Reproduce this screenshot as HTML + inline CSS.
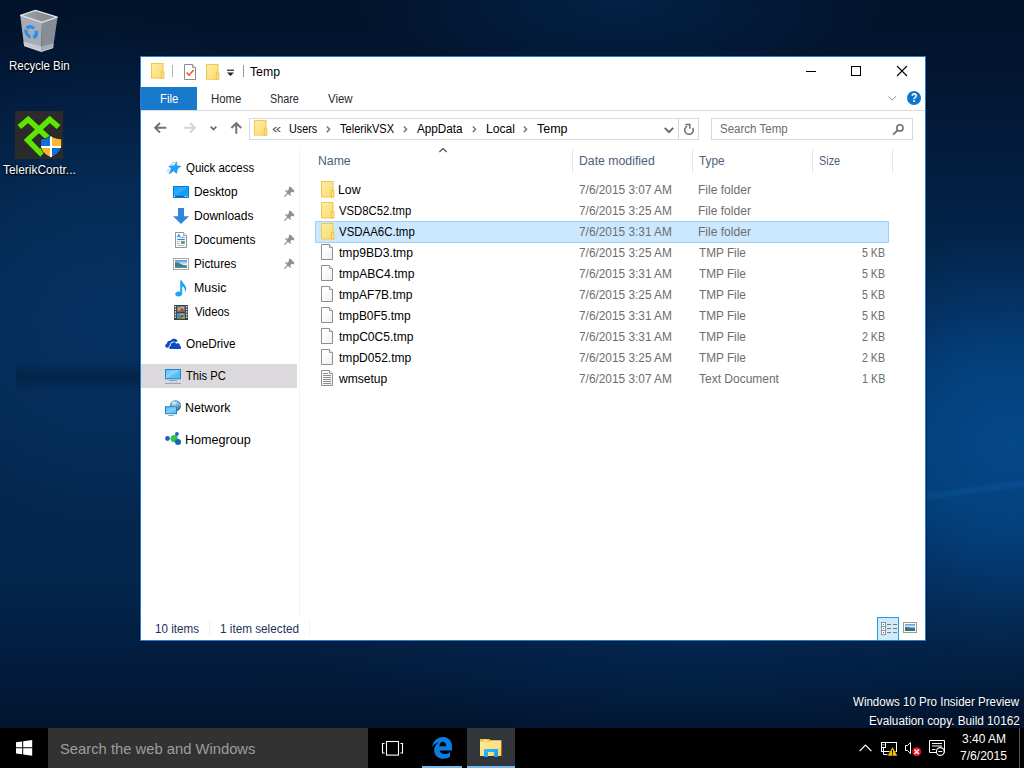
<!DOCTYPE html>
<html><head><meta charset="utf-8"><title>Temp</title>
<style>
html,body{margin:0;padding:0;}
body{width:1024px;height:768px;overflow:hidden;position:relative;background:#06244a;font-family:"Liberation Sans",sans-serif;}
.t{position:absolute;white-space:nowrap;line-height:20px;transform-origin:0 50%;font-family:"Liberation Sans",sans-serif;}
.a{position:absolute;}
svg{position:absolute;overflow:visible;}
</style></head><body>
<div class="a" id="bg" style="left:0;top:0;width:1024px;height:768px;background:
radial-gradient(ellipse 300px 262px at 1010px 445px, rgba(5,74,142,0.95) 0%, rgba(4,66,128,0.88) 35%, rgba(4,52,102,0.6) 62%, rgba(3,40,80,0.25) 82%, rgba(2,20,46,0) 100%),
radial-gradient(ellipse 330px 300px at 110px 320px, rgba(5,50,98,0.95) 0%, rgba(5,46,92,0.85) 40%, rgba(4,38,78,0.5) 70%, rgba(3,30,64,0) 100%),
radial-gradient(ellipse 260px 90px at 620px 0px, rgba(3,40,80,0.7), rgba(2,20,44,0) 100%),
radial-gradient(ellipse 380px 100px at 700px 640px, rgba(3,40,84,0.7), rgba(2,20,44,0) 100%),
linear-gradient(to bottom,#02132b 0px,#02152f 60px,#031e40 180px,#03264e 300px,#03264e 570px,#031e40 650px,#02152f 728px);"></div>
<div class="a" style="left:16px;top:362px;width:124px;height:30px;background:linear-gradient(to bottom,rgba(2,20,44,0),rgba(2,20,44,0.42) 50%,rgba(2,20,44,0));"></div>
<div class="a" style="left:926px;top:470px;width:98px;height:40px;background:linear-gradient(172deg,rgba(20,110,190,0) 40%,rgba(20,110,190,0.22) 50%,rgba(20,110,190,0) 60%);"></div>
<svg style="left:0;top:0" width="80" height="60" viewBox="0 0 80 60">
<defs><linearGradient id="rb1" x1="0" y1="0" x2="1" y2="0"><stop offset="0" stop-color="#a4a9b1"/><stop offset="0.5" stop-color="#8c9199"/><stop offset="1" stop-color="#838892"/></linearGradient></defs>
<path d="M20.2 15.4 L42 22.6 L41.3 51.6 L24.1 45.7 Z" fill="#a8adb5"/>
<path d="M42 22.6 L57.6 17.1 L53.1 47.7 L41.3 51.6 Z" fill="#878d96"/>
<path d="M23.5 41.4 L41.4 46.4 L41.3 51.6 L24.1 45.7 Z" fill="#c6c9d1"/>
<path d="M41.4 46.4 L53.6 43.6 L53.1 47.7 L41.3 51.6 Z" fill="#a9aeb7"/>
<path d="M20.6 15.4 L35.5 10.4 L57.2 17.1 L42 22.4 Z" fill="url(#rb1)" stroke="#e1e4e8" stroke-width="1.25" stroke-linejoin="round"/>
<path d="M24.1 45.7 L41.3 51.6 L53.1 47.7" fill="none" stroke="#d6d9de" stroke-width="0.8" stroke-linejoin="round"/>
<g transform="matrix(1 0.22 0 1 0 -7)">
<circle cx="31.2" cy="32.2" r="5.2" fill="none" stroke="#2390f0" stroke-width="3.3" stroke-dasharray="8.4 2.5" transform="rotate(-150 31.2 32.2)"/>
</g>
</svg>
<span class="t" style="left:9.10px;top:56.00px;font-size:12px;color:#fff;transform:scaleX(0.9564);line-height:20px;text-shadow:0 1px 2px #000,0 0 2px #000;">Recycle Bin</span>
<svg style="left:0;top:100px" width="80" height="70" viewBox="0 100 80 70">
<rect x="15" y="111" width="48" height="48" fill="#2b2b2b"/>
<g fill="none" stroke="#5ce600" stroke-width="5.4" stroke-linejoin="miter">
<path d="M19.3 127 L28.2 119.4 L49.5 139.2"/>
<path d="M58.6 127 L49.7 119.4 L27.6 140 L40.2 152.8 L50 142"/>
</g>
<defs><clipPath id="sh"><path d="M41 139.3 C45 139 48.5 138 51 136.2 C53.5 138 57 139 61.2 139.3 L61.2 146 C60.5 151 56.5 155 51 157.2 C45.5 155 41.6 151 41 146 Z"/></clipPath></defs>
<path d="M41 139.3 C45 139 48.5 138 51 136.2 C53.5 138 57 139 61.2 139.3 L61.2 146 C60.5 151 56.5 155 51 157.2 C45.5 155 41.6 151 41 146 Z" fill="none" stroke="#1d1d1d" stroke-width="1.2"/>
<g clip-path="url(#sh)">
<rect x="40" y="135" width="11" height="12" fill="#0f6fd6"/><rect x="51" y="135" width="11" height="12" fill="#fdb72f"/>
<rect x="40" y="147" width="11" height="11" fill="#fdb72f"/><rect x="51" y="147" width="11" height="11" fill="#0f6fd6"/>
<rect x="50" y="135" width="2" height="23" fill="#fff"/><rect x="40" y="146" width="22" height="2" fill="#fff"/>
</g>
</svg>
<span class="t" style="left:2.75px;top:160.00px;font-size:12px;color:#fff;transform:scaleX(0.9917);line-height:20px;text-shadow:0 1px 2px #000,0 0 2px #000;">TelerikContr...</span>
<span class="t" style="left:852.50px;top:692.00px;font-size:12px;color:#fff;transform:scaleX(0.9617);line-height:20px;text-shadow:0 1px 1px rgba(0,0,0,.6);">Windows 10 Pro Insider Preview</span>
<span class="t" style="left:868.58px;top:711.00px;font-size:12px;color:#fff;transform:scaleX(0.9798);line-height:20px;text-shadow:0 1px 1px rgba(0,0,0,.6);">Evaluation copy. Build 10162</span>
<div class="a" style="left:139px;top:55px;width:788px;height:587px;background:rgba(0,5,20,0.35);"></div>
<div class="a" id="win" style="left:140px;top:56px;width:784px;height:583px;border:1px solid #1883d7;background:#fff;"></div>
<svg style="left:151px;top:63px" width="14" height="16.0727" viewBox="0 0 14 17" preserveAspectRatio="none">
<defs><linearGradient id="fg1" x1="0" y1="0" x2="1" y2="1"><stop offset="0" stop-color="#ffeea4"/><stop offset="1" stop-color="#fbd971"/></linearGradient></defs>
<rect x="0.5" y="0.5" width="11.5" height="15.5" fill="url(#fg1)" stroke="#eec84e"/>
<rect x="10.3" y="9.5" width="2.6" height="6.5" fill="#ffe48a" stroke="#eabf3f" stroke-width="0.9"/>
</svg>
<div class="a" style="left:172px;top:65px;width:1px;height:12px;background:#b4b4b4;"></div>
<svg style="left:184px;top:64px" width="13" height="16" viewBox="0 0 13 16">
<path d="M0.5 0.5 L8.5 0.5 L11.5 3.5 L11.5 15.5 L0.5 15.5 Z" fill="#fff" stroke="#8c8c8c"/>
<path d="M8.5 0.5 L8.5 3.5 L11.5 3.5" fill="#ececec" stroke="#8c8c8c" stroke-width="0.9"/>
<path d="M2.6 8.6 L5 11.2 L9.6 6" fill="none" stroke="#f0541e" stroke-width="1.5"/>
</svg>
<svg style="left:206px;top:64px" width="14" height="16.2788" viewBox="0 0 14 17" preserveAspectRatio="none">
<defs><linearGradient id="fg2" x1="0" y1="0" x2="1" y2="1"><stop offset="0" stop-color="#ffeea4"/><stop offset="1" stop-color="#fbd971"/></linearGradient></defs>
<rect x="0.5" y="0.5" width="11.5" height="15.5" fill="url(#fg2)" stroke="#eec84e"/>
<rect x="10.3" y="9.5" width="2.6" height="6.5" fill="#ffe48a" stroke="#eabf3f" stroke-width="0.9"/>
</svg>
<svg style="left:227px;top:69px" width="8" height="8" viewBox="0 0 8 8"><rect x="0" y="0.6" width="7" height="1.2" fill="#222"/><path d="M0 3.5 L7 3.5 L3.5 7 Z" fill="#222"/></svg>
<div class="a" style="left:243px;top:65px;width:1px;height:12px;background:#9a9a9a;"></div>
<span class="t" style="left:250.24px;top:62.00px;font-size:12px;color:#000;transform:scaleX(1.0201);line-height:20px;">Temp</span>
<div class="a" style="left:806px;top:71px;width:10px;height:1px;background:#000;"></div>
<div class="a" style="left:851px;top:66px;width:8px;height:8px;border:1px solid #000;"></div>
<svg style="left:897px;top:66px" width="10" height="10" viewBox="0 0 10 10"><path d="M0 0 L10 10 M10 0 L0 10" stroke="#000" stroke-width="1.1" fill="none"/></svg>
<div class="a" style="left:141px;top:87px;width:56px;height:23px;background:#1979ca;"></div>
<span class="t" style="left:159.71px;top:89.00px;font-size:12px;color:#fff;transform:scaleX(0.9477);line-height:20px;">File</span>
<span class="t" style="left:210.71px;top:89.00px;font-size:12px;color:#2b2b2b;transform:scaleX(0.9489);line-height:20px;">Home</span>
<span class="t" style="left:270.15px;top:89.00px;font-size:12px;color:#2b2b2b;transform:scaleX(0.9014);line-height:20px;">Share</span>
<span class="t" style="left:328.00px;top:89.00px;font-size:12px;color:#2b2b2b;transform:scaleX(0.9507);line-height:20px;">View</span>
<div class="a" style="left:141px;top:110px;width:784px;height:1px;background:#dadbdc;"></div>
<svg style="left:888px;top:96px" width="9" height="5" viewBox="0 0 9 5"><path d="M0.4 0.4 L4.2 4 L8 0.4" stroke="#8c8c8c" stroke-width="1" fill="none"/></svg>
<div class="a" style="left:907px;top:91px;width:14px;height:14px;border-radius:7px;background:#0f74d0;"></div>
<span class="t" style="left:910.87px;top:88.00px;font-size:12px;color:#fff;font-weight:bold;transform:scaleX(0.8566);line-height:20px;">?</span>
<svg style="left:154px;top:122px" width="13" height="12" viewBox="0 0 13 12"><path d="M12.2 5.8 L1.6 5.8 M6 1 L1.2 5.8 L6 10.6" stroke="#727272" stroke-width="2" fill="none"/></svg>
<svg style="left:182.8px;top:122px" width="13" height="12" viewBox="0 0 13 12"><path d="M0.8 5.8 L11.4 5.8 M7 1 L11.8 5.8 L7 10.6" stroke="#d4d4d4" stroke-width="2" fill="none"/></svg>
<svg style="left:210px;top:126px" width="7" height="5" viewBox="0 0 7 5"><path d="M0.7 0.7 L3.5 3.5 L6.3 0.7" stroke="#6a6a6a" stroke-width="1.7" fill="none"/></svg>
<svg style="left:230px;top:122px" width="13" height="12" viewBox="0 0 13 12"><path d="M6.3 11.8 L6.3 1.4 M1.4 6 L6.3 1.1 L11.2 6" stroke="#727272" stroke-width="2" fill="none"/></svg>
<div class="a" style="left:249px;top:118px;width:448px;height:20px;border:1px solid #d9d9d9;background:#fff;"></div>
<svg style="left:254px;top:120px" width="14" height="16.0727" viewBox="0 0 14 17" preserveAspectRatio="none">
<defs><linearGradient id="fg3" x1="0" y1="0" x2="1" y2="1"><stop offset="0" stop-color="#ffeea4"/><stop offset="1" stop-color="#fbd971"/></linearGradient></defs>
<rect x="0.5" y="0.5" width="11.5" height="15.5" fill="url(#fg3)" stroke="#eec84e"/>
<rect x="10.3" y="9.5" width="2.6" height="6.5" fill="#ffe48a" stroke="#eabf3f" stroke-width="0.9"/>
</svg>
<span class="t" style="left:272.39px;top:119.00px;font-size:12px;color:#555;transform:scaleX(1.3913);line-height:20px;">«</span>
<span class="t" style="left:289.21px;top:119.00px;font-size:12px;color:#000;transform:scaleX(0.8981);line-height:20px;">Users</span>
<svg style="left:326.3px;top:126px" width="5" height="7" viewBox="0 0 5 7"><path d="M0.8 0.5 L3.6 3.3 L0.8 6.1" stroke="#777" stroke-width="1.5" fill="none"/></svg>
<span class="t" style="left:340.17px;top:119.00px;font-size:12px;color:#000;transform:scaleX(0.9212);line-height:20px;">TelerikVSX</span>
<svg style="left:402.7px;top:126px" width="5" height="7" viewBox="0 0 5 7"><path d="M0.8 0.5 L3.6 3.3 L0.8 6.1" stroke="#777" stroke-width="1.5" fill="none"/></svg>
<span class="t" style="left:417.20px;top:119.00px;font-size:12px;color:#000;transform:scaleX(0.9767);line-height:20px;">AppData</span>
<svg style="left:472px;top:126px" width="5" height="7" viewBox="0 0 5 7"><path d="M0.8 0.5 L3.6 3.3 L0.8 6.1" stroke="#777" stroke-width="1.5" fill="none"/></svg>
<span class="t" style="left:485.65px;top:119.00px;font-size:12px;color:#000;transform:scaleX(1.0097);line-height:20px;">Local</span>
<svg style="left:522.8px;top:126px" width="5" height="7" viewBox="0 0 5 7"><path d="M0.8 0.5 L3.6 3.3 L0.8 6.1" stroke="#777" stroke-width="1.5" fill="none"/></svg>
<span class="t" style="left:536.74px;top:119.00px;font-size:12px;color:#000;transform:scaleX(1.0410);line-height:20px;">Temp</span>
<svg style="left:664px;top:127px" width="10" height="7" viewBox="0 0 10 7"><path d="M0.8 0.9 L5 5.1 L9.2 0.9" stroke="#666" stroke-width="1.9" fill="none"/></svg>
<div class="a" style="left:678px;top:119px;width:1px;height:20px;background:#d9d9d9;"></div>
<svg style="left:683px;top:123px" width="12" height="12" viewBox="0 0 12 12"><path d="M9.7 4.85 A4.3 4.3 0 1 1 4.2 3.1" stroke="#6e6e6e" stroke-width="1.5" fill="none"/><path d="M2.4 1.5 L6.8 1.5 L6.8 5.8" stroke="#6e6e6e" stroke-width="1.5" fill="none"/></svg>
<div class="a" style="left:711px;top:118px;width:200px;height:20px;border:1px solid #d9d9d9;background:#fff;"></div>
<span class="t" style="left:720.32px;top:119.00px;font-size:12px;color:#6d6d6d;transform:scaleX(0.9597);line-height:20px;">Search Temp</span>
<svg style="left:892px;top:123px" width="13" height="13" viewBox="0 0 13 13"><circle cx="7.9" cy="4.9" r="3.1" stroke="#707070" stroke-width="1.6" fill="none"/><path d="M5.5 7.3 L1.1 11.6" stroke="#707070" stroke-width="1.8"/></svg>
<span class="t" style="left:154.95px;top:619.00px;font-size:12px;color:#23305a;transform:scaleX(0.9700);line-height:20px;">10 items</span>
<span class="t" style="left:219.94px;top:619.00px;font-size:12px;color:#23305a;transform:scaleX(0.9782);line-height:20px;">1 item selected</span>
<div class="a" style="left:209px;top:621px;width:1px;height:14px;background:#f1f1f1;"></div>
<div class="a" style="left:309px;top:621px;width:1px;height:14px;background:#f1f1f1;"></div>
<div class="a" style="left:299px;top:146px;width:1px;height:471px;background:#f4f4f4;"></div>
<div class="a" style="left:141px;top:364px;width:156px;height:24px;background:#dbd9dc;"></div>
<svg style="left:162px;top:156px" width="32" height="24" viewBox="0 0 32 24">
<path d="M14.6 5.8 L14.9 9.9 L19.1 10.1 L15.6 12.7 L14.6 17.4 L11.6 14.9 L7.1 17.9 L9.1 12.6 L6.8 10.1 L12.2 9.7 Z" fill="#22a2f5" stroke="#1b8fe4" stroke-width="0.5" stroke-linejoin="round"/>
<path d="M9.7 6.5 L13.2 6.5 M8.4 8.5 L11.4 8.5 M5.3 13.5 L7.8 13.5 M4.4 15.6 L6.9 15.6" stroke="#7cc6f8" stroke-width="0.8"/>
</svg>
<span class="t" style="left:185.76px;top:158.00px;font-size:12px;color:#000;transform:scaleX(0.9555);line-height:20px;">Quick access</span>
<svg style="left:173px;top:186px" width="16" height="12" viewBox="0 0 16 12">
<defs><linearGradient id="dk" x1="0" y1="0" x2="1" y2="1"><stop offset="0" stop-color="#1a9ff8"/><stop offset="0.45" stop-color="#2eacfd"/><stop offset="0.55" stop-color="#129cf8"/><stop offset="1" stop-color="#1ea4fb"/></linearGradient></defs>
<rect x="0.5" y="0.5" width="15" height="11" fill="url(#dk)" stroke="#0b7ccd"/>
<rect x="1" y="9.8" width="14" height="1.7" fill="#0b7ccd"/>
<rect x="2" y="10" width="9" height="0.9" fill="#0a5fa8"/>
<rect x="1" y="9.9" width="1" height="1.1" fill="#fff"/><rect x="11.8" y="9.9" width="1" height="1.1" fill="#fff"/><rect x="13.8" y="9.9" width="1" height="1.1" fill="#fff"/>
</svg>
<span class="t" style="left:193.67px;top:182.00px;font-size:12px;color:#000;transform:scaleX(0.9900);line-height:20px;">Desktop</span>
<svg style="left:173px;top:208px" width="16" height="16" viewBox="0 0 16 16">
<path d="M5 0 L11 0 L11 8.2 L16 8.2 L8 16 L0 8.2 L5 8.2 Z" fill="#2e86de"/>
</svg>
<span class="t" style="left:193.66px;top:206.00px;font-size:12px;color:#000;transform:scaleX(1.0024);line-height:20px;">Downloads</span>
<svg style="left:175px;top:232px" width="13" height="16" viewBox="0 0 13 16">
<path d="M0.5 0.5 L8.5 0.5 L11.5 3.5 L11.5 15.5 L0.5 15.5 Z" fill="#fff" stroke="#949494"/>
<path d="M8.5 0.5 L8.5 3.5 L11.5 3.5" fill="#efefef" stroke="#949494" stroke-width="0.8"/>
<path d="M2.3 5.6 L3.9 2.2 L5.4 5.6 M2.9 4.5 L4.9 4.5" stroke="#2f86de" stroke-width="0.9" fill="none"/>
<path d="M6.2 5.2 L9.8 5.2" stroke="#3f93e4" stroke-width="0.9"/>
<path d="M2.2 7.4 L9.8 7.4" stroke="#1f7fdc" stroke-width="1.1"/>
<path d="M2.2 9.4 L4.8 9.4 M2.2 11.4 L4.8 11.4 M2.2 13.4 L9.8 13.4" stroke="#a8a8a8" stroke-width="0.9"/>
<rect x="6" y="8.8" width="3.8" height="1.4" fill="#5a9be8"/><rect x="6" y="10.2" width="3.8" height="1.6" fill="#4f8058"/>
</svg>
<span class="t" style="left:193.65px;top:230.00px;font-size:12px;color:#000;transform:scaleX(1.0139);line-height:20px;">Documents</span>
<svg style="left:173px;top:258px" width="16" height="12" viewBox="0 0 16 12">
<defs><linearGradient id="pc1" x1="0" y1="0" x2="0" y2="1"><stop offset="0" stop-color="#3f8df0"/><stop offset="0.3" stop-color="#9cc8f6"/><stop offset="0.55" stop-color="#e4f1fb"/><stop offset="0.75" stop-color="#7fa8c8"/><stop offset="1" stop-color="#3a74b8"/></linearGradient></defs>
<rect x="0.5" y="0.5" width="15" height="11" fill="#fff" stroke="#a6a6a6"/>
<rect x="2" y="2" width="12" height="8" fill="url(#pc1)"/>
<path d="M2 4.6 L4.5 4.2 L7 5.6 L10 7 L13.6 7.8 L14 8.6 L2 8.6 Z" fill="#3f7052" opacity="0.9"/>
</svg>
<span class="t" style="left:193.68px;top:254.00px;font-size:12px;color:#000;transform:scaleX(0.9795);line-height:20px;">Pictures</span>
<svg style="left:175px;top:279.5px" width="12" height="17" viewBox="0 0 12 17">
<path d="M5.2 0.4 L7 0.4 C7.6 3.4 10.8 4.6 11.2 8 C11.3 9.8 10.8 11 10 12 C10.4 9.2 9.2 7.2 7.2 6.4 L7.2 13.4 C7.2 15.2 5.4 16.4 3.4 16.4 C1.6 16.4 0.2 15.5 0.2 14.2 C0.2 12.6 1.9 11.4 3.8 11.4 C4.3 11.4 4.8 11.5 5.2 11.7 Z" fill="#1fa4f4"/>
</svg>
<span class="t" style="left:193.63px;top:278.00px;font-size:12px;color:#000;transform:scaleX(1.0312);line-height:20px;">Music</span>
<svg style="left:174px;top:305px" width="14" height="15" viewBox="0 0 14 15">
<rect x="0" y="0" width="14" height="15" fill="#404040"/>
<rect x="3" y="1" width="8" height="6" fill="#3f7ad8"/><rect x="3" y="8" width="8" height="6" fill="#4787e0"/>
<rect x="3.6" y="2.4" width="2.6" height="3.4" fill="#d9a23a"/><rect x="6.6" y="1.8" width="3.2" height="3.2" fill="#e8c84a"/><rect x="7.2" y="3.2" width="2" height="2.6" fill="#7a4a2a"/>
<rect x="3" y="5.8" width="8" height="1.2" fill="#c8483a"/>
<rect x="6.4" y="8.8" width="3" height="2.6" fill="#e0b040"/><rect x="6.8" y="10.2" width="2.2" height="2" fill="#6a4028"/>
<rect x="3" y="12.6" width="8" height="1.4" fill="#4f9a48"/><rect x="7.6" y="12.2" width="3.4" height="1" fill="#d8a838"/>
<g fill="#ececec"><rect x="0.7" y="1" width="1.4" height="1.4"/><rect x="0.7" y="3.6" width="1.4" height="1.4"/><rect x="0.7" y="6.2" width="1.4" height="1.4"/><rect x="0.7" y="8.8" width="1.4" height="1.4"/><rect x="0.7" y="11.4" width="1.4" height="1.4"/>
<rect x="11.9" y="1" width="1.4" height="1.4"/><rect x="11.9" y="3.6" width="1.4" height="1.4"/><rect x="11.9" y="6.2" width="1.4" height="1.4"/><rect x="11.9" y="8.8" width="1.4" height="1.4"/><rect x="11.9" y="11.4" width="1.4" height="1.4"/></g>
</svg>
<span class="t" style="left:194.60px;top:302.00px;font-size:12px;color:#000;transform:scaleX(0.9439);line-height:20px;">Videos</span>
<svg style="left:284px;top:187px" width="10" height="10" viewBox="0 0 10 10">
<path d="M0.4 9.6 L4 6" stroke="#87929a" stroke-width="1.2"/>
<path d="M4.3 5.7 L7.3 2.7" stroke="#87929a" stroke-width="4"/>
<path d="M5.9 0.9 L9.1 4.1" stroke="#87929a" stroke-width="2.4" stroke-linecap="round"/>
<path d="M2 3.8 L6.2 8" stroke="#87929a" stroke-width="1.5" stroke-linecap="round"/>
</svg>
<svg style="left:284px;top:211px" width="10" height="10" viewBox="0 0 10 10">
<path d="M0.4 9.6 L4 6" stroke="#87929a" stroke-width="1.2"/>
<path d="M4.3 5.7 L7.3 2.7" stroke="#87929a" stroke-width="4"/>
<path d="M5.9 0.9 L9.1 4.1" stroke="#87929a" stroke-width="2.4" stroke-linecap="round"/>
<path d="M2 3.8 L6.2 8" stroke="#87929a" stroke-width="1.5" stroke-linecap="round"/>
</svg>
<svg style="left:284px;top:235px" width="10" height="10" viewBox="0 0 10 10">
<path d="M0.4 9.6 L4 6" stroke="#87929a" stroke-width="1.2"/>
<path d="M4.3 5.7 L7.3 2.7" stroke="#87929a" stroke-width="4"/>
<path d="M5.9 0.9 L9.1 4.1" stroke="#87929a" stroke-width="2.4" stroke-linecap="round"/>
<path d="M2 3.8 L6.2 8" stroke="#87929a" stroke-width="1.5" stroke-linecap="round"/>
</svg>
<svg style="left:284px;top:259px" width="10" height="10" viewBox="0 0 10 10">
<path d="M0.4 9.6 L4 6" stroke="#87929a" stroke-width="1.2"/>
<path d="M4.3 5.7 L7.3 2.7" stroke="#87929a" stroke-width="4"/>
<path d="M5.9 0.9 L9.1 4.1" stroke="#87929a" stroke-width="2.4" stroke-linecap="round"/>
<path d="M2 3.8 L6.2 8" stroke="#87929a" stroke-width="1.5" stroke-linecap="round"/>
</svg>
<svg style="left:160px;top:332px" width="32" height="24" viewBox="0 0 32 24">
<path d="M6.4 15.6 C4.8 14.8 4.8 12.2 7 11.4 C7 9.6 8.6 8.5 10.3 8.8 C11.2 7.3 12.8 6.7 14.4 6.7 C16.1 6.7 17.3 7.7 17.5 9.4 L16.4 9.8 L10 16 Z" fill="#0f4bc0"/>
<path d="M9.9 17 C9 16.6 8.9 14 10.8 13.5 C10.9 11.5 12.3 10.3 13.7 10.3 C14.8 10.3 15.7 10.8 16.3 11.7 C17 11.2 18 11.2 18.7 11.6 C19.6 12.2 20 13.1 20 14 C20.8 14.3 21.1 15 21.1 15.7 C21.1 16.4 20.8 17 20.3 17 Z" fill="#0f4bc0" stroke="#fff" stroke-width="1.7" paint-order="stroke"/>
<rect x="5" y="17.05" width="17" height="2" fill="#fff"/>
</svg>
<span class="t" style="left:185.85px;top:334.00px;font-size:12px;color:#000;transform:scaleX(0.9793);line-height:20px;">OneDrive</span>
<svg style="left:165px;top:369px" width="16" height="15" viewBox="0 0 16 15">
<defs><linearGradient id="tp" x1="0" y1="0" x2="1" y2="1"><stop offset="0" stop-color="#52bcf9"/><stop offset="0.45" stop-color="#8ad5fc"/><stop offset="0.55" stop-color="#5cc2fa"/><stop offset="1" stop-color="#4ab6f7"/></linearGradient></defs>
<rect x="0.5" y="0.5" width="15" height="9.3" fill="url(#tp)" stroke="#2d82c2" stroke-width="1"/>
<rect x="4" y="11" width="8" height="0.9" fill="#7d9db8"/>
<rect x="0" y="13.9" width="16" height="0.9" fill="#7d9db8"/>
</svg>
<span class="t" style="left:186.17px;top:366.00px;font-size:12px;color:#000;transform:scaleX(0.9333);line-height:20px;">This PC</span>
<svg style="left:165px;top:400px" width="16" height="16" viewBox="0 0 16 16">
<defs><radialGradient id="gl" cx="0.4" cy="0.3" r="0.75"><stop offset="0" stop-color="#d2ecf8"/><stop offset="0.5" stop-color="#5a9cc4"/><stop offset="1" stop-color="#2c6c98"/></radialGradient>
<linearGradient id="nm" x1="0" y1="0" x2="1" y2="1"><stop offset="0" stop-color="#52bcf9"/><stop offset="0.5" stop-color="#7fd0fb"/><stop offset="1" stop-color="#4ab6f7"/></linearGradient></defs>
<circle cx="10.4" cy="5.7" r="5.6" fill="url(#gl)"/>
<path d="M7 3.2 C8.5 2 10 3.6 11.8 2.2 M6 7 C8 5.6 9.4 8 12.6 6.2 M12.5 3.5 C13.4 4.5 14.5 4 15 5.5" stroke="#e4f5fc" stroke-width="1" fill="none" opacity="0.85"/>
<rect x="0.5" y="6.7" width="11" height="7" fill="url(#nm)" stroke="#2d82c2" stroke-width="1"/>
<rect x="3.2" y="15" width="5.6" height="0.9" fill="#7d9db8"/>
</svg>
<span class="t" style="left:185.43px;top:398.00px;font-size:12px;color:#000;transform:scaleX(1.0342);line-height:20px;">Network</span>
<svg style="left:165px;top:432px" width="16" height="13" viewBox="0 0 16 13">
<circle cx="2.5" cy="6.5" r="2.4" fill="#1763c0"/>
<circle cx="9.2" cy="6.6" r="3.7" fill="#33c152"/>
<circle cx="11.9" cy="2" r="1.9" fill="#1763c0"/>
<circle cx="13" cy="10" r="3" fill="#1763c0"/>
</svg>
<span class="t" style="left:185.42px;top:430.00px;font-size:12px;color:#000;transform:scaleX(1.0482);line-height:20px;">Homegroup</span>
<span class="t" style="left:317.84px;top:151.00px;font-size:12px;color:#4c607a;transform:scaleX(1.0209);line-height:20px;">Name</span>
<span class="t" style="left:578.64px;top:151.00px;font-size:12px;color:#4c607a;transform:scaleX(1.0225);line-height:20px;">Date modified</span>
<span class="t" style="left:698.95px;top:151.00px;font-size:12px;color:#4c607a;transform:scaleX(0.9822);line-height:20px;">Type</span>
<span class="t" style="left:818.55px;top:151.00px;font-size:12px;color:#4c607a;transform:scaleX(0.9073);line-height:20px;">Size</span>
<svg style="left:438.5px;top:147.6px" width="8" height="5" viewBox="0 0 8 5"><path d="M0.4 4 L4 0.5 L7.6 4" stroke="#4a4a4a" stroke-width="1.1" fill="none"/></svg>
<div class="a" style="left:572px;top:149px;width:1px;height:24px;background:#e5e5e5;"></div>
<div class="a" style="left:692px;top:149px;width:1px;height:24px;background:#e5e5e5;"></div>
<div class="a" style="left:812px;top:149px;width:1px;height:24px;background:#e5e5e5;"></div>
<div class="a" style="left:892px;top:149px;width:1px;height:24px;background:#e5e5e5;"></div>
<div class="a" style="left:315px;top:221px;width:572px;height:20px;border:1px solid #99d1ff;background:#cce8ff;"></div>
<svg style="left:321px;top:181px" width="14" height="17" viewBox="0 0 14 17" preserveAspectRatio="none">
<defs><linearGradient id="fg4" x1="0" y1="0" x2="1" y2="1"><stop offset="0" stop-color="#ffeea4"/><stop offset="1" stop-color="#fbd971"/></linearGradient></defs>
<rect x="0.5" y="0.5" width="11.5" height="15.5" fill="url(#fg4)" stroke="#eec84e"/>
<rect x="10.3" y="9.5" width="2.6" height="6.5" fill="#ffe48a" stroke="#eabf3f" stroke-width="0.9"/>
</svg>
<span class="t" style="left:338.34px;top:180.00px;font-size:12px;color:#000;transform:scaleX(1.0242);line-height:20px;">Low</span>
<span class="t" style="left:579.04px;top:180.00px;font-size:12px;color:#6d6d6d;transform:scaleX(0.9874);line-height:20px;">7/6/2015 3:07 AM</span>
<span class="t" style="left:698.46px;top:180.00px;font-size:12px;color:#6d6d6d;transform:scaleX(1.0046);line-height:20px;">File folder</span>
<svg style="left:321px;top:202px" width="14" height="17" viewBox="0 0 14 17" preserveAspectRatio="none">
<defs><linearGradient id="fg5" x1="0" y1="0" x2="1" y2="1"><stop offset="0" stop-color="#ffeea4"/><stop offset="1" stop-color="#fbd971"/></linearGradient></defs>
<rect x="0.5" y="0.5" width="11.5" height="15.5" fill="url(#fg5)" stroke="#eec84e"/>
<rect x="10.3" y="9.5" width="2.6" height="6.5" fill="#ffe48a" stroke="#eabf3f" stroke-width="0.9"/>
</svg>
<span class="t" style="left:339.30px;top:201.00px;font-size:12px;color:#000;transform:scaleX(0.9411);line-height:20px;">VSD8C52.tmp</span>
<span class="t" style="left:579.04px;top:201.00px;font-size:12px;color:#6d6d6d;transform:scaleX(0.9874);line-height:20px;">7/6/2015 3:25 AM</span>
<span class="t" style="left:698.46px;top:201.00px;font-size:12px;color:#6d6d6d;transform:scaleX(1.0046);line-height:20px;">File folder</span>
<svg style="left:321px;top:223px" width="14" height="17" viewBox="0 0 14 17" preserveAspectRatio="none">
<defs><linearGradient id="fg6" x1="0" y1="0" x2="1" y2="1"><stop offset="0" stop-color="#ffeea4"/><stop offset="1" stop-color="#fbd971"/></linearGradient></defs>
<rect x="0.5" y="0.5" width="11.5" height="15.5" fill="url(#fg6)" stroke="#eec84e"/>
<rect x="10.3" y="9.5" width="2.6" height="6.5" fill="#ffe48a" stroke="#eabf3f" stroke-width="0.9"/>
</svg>
<span class="t" style="left:339.30px;top:222.00px;font-size:12px;color:#000;transform:scaleX(0.9547);line-height:20px;">VSDAA6C.tmp</span>
<span class="t" style="left:579.04px;top:222.00px;font-size:12px;color:#6d6d6d;transform:scaleX(0.9874);line-height:20px;">7/6/2015 3:31 AM</span>
<span class="t" style="left:698.46px;top:222.00px;font-size:12px;color:#6d6d6d;transform:scaleX(1.0046);line-height:20px;">File folder</span>
<svg style="left:321px;top:244px" width="13" height="17" viewBox="0 0 13 17">
<defs><linearGradient id="dg3" x1="0" y1="0" x2="1" y2="1"><stop offset="0.3" stop-color="#fff"/><stop offset="1" stop-color="#eceef6"/></linearGradient></defs>
<path d="M0.5 0.5 L8.5 0.5 L11.5 3.5 L11.5 15.5 L0.5 15.5 Z" fill="url(#dg3)" stroke="#8e8e8e"/>
<path d="M8.5 0.5 L8.5 3.5 L11.5 3.5" fill="#f4f4f4" stroke="#8e8e8e" stroke-width="0.9"/>
</svg>
<span class="t" style="left:339.17px;top:243.00px;font-size:12px;color:#000;transform:scaleX(1.0076);line-height:20px;">tmp9BD3.tmp</span>
<span class="t" style="left:579.04px;top:243.00px;font-size:12px;color:#6d6d6d;transform:scaleX(0.9874);line-height:20px;">7/6/2015 3:25 AM</span>
<span class="t" style="left:699.15px;top:243.00px;font-size:12px;color:#6d6d6d;transform:scaleX(0.9817);line-height:20px;">TMP File</span>
<span class="t" style="left:862.21px;top:243.00px;font-size:12px;color:#6d6d6d;transform:scaleX(0.8822);line-height:20px;">5 KB</span>
<svg style="left:321px;top:265px" width="13" height="17" viewBox="0 0 13 17">
<defs><linearGradient id="dg4" x1="0" y1="0" x2="1" y2="1"><stop offset="0.3" stop-color="#fff"/><stop offset="1" stop-color="#eceef6"/></linearGradient></defs>
<path d="M0.5 0.5 L8.5 0.5 L11.5 3.5 L11.5 15.5 L0.5 15.5 Z" fill="url(#dg4)" stroke="#8e8e8e"/>
<path d="M8.5 0.5 L8.5 3.5 L11.5 3.5" fill="#f4f4f4" stroke="#8e8e8e" stroke-width="0.9"/>
</svg>
<span class="t" style="left:339.17px;top:264.00px;font-size:12px;color:#000;transform:scaleX(1.0100);line-height:20px;">tmpABC4.tmp</span>
<span class="t" style="left:579.04px;top:264.00px;font-size:12px;color:#6d6d6d;transform:scaleX(0.9874);line-height:20px;">7/6/2015 3:31 AM</span>
<span class="t" style="left:699.15px;top:264.00px;font-size:12px;color:#6d6d6d;transform:scaleX(0.9817);line-height:20px;">TMP File</span>
<span class="t" style="left:862.21px;top:264.00px;font-size:12px;color:#6d6d6d;transform:scaleX(0.8822);line-height:20px;">5 KB</span>
<svg style="left:321px;top:286px" width="13" height="17" viewBox="0 0 13 17">
<defs><linearGradient id="dg5" x1="0" y1="0" x2="1" y2="1"><stop offset="0.3" stop-color="#fff"/><stop offset="1" stop-color="#eceef6"/></linearGradient></defs>
<path d="M0.5 0.5 L8.5 0.5 L11.5 3.5 L11.5 15.5 L0.5 15.5 Z" fill="url(#dg5)" stroke="#8e8e8e"/>
<path d="M8.5 0.5 L8.5 3.5 L11.5 3.5" fill="#f4f4f4" stroke="#8e8e8e" stroke-width="0.9"/>
</svg>
<span class="t" style="left:339.17px;top:285.00px;font-size:12px;color:#000;transform:scaleX(1.0021);line-height:20px;">tmpAF7B.tmp</span>
<span class="t" style="left:579.04px;top:285.00px;font-size:12px;color:#6d6d6d;transform:scaleX(0.9874);line-height:20px;">7/6/2015 3:25 AM</span>
<span class="t" style="left:699.15px;top:285.00px;font-size:12px;color:#6d6d6d;transform:scaleX(0.9817);line-height:20px;">TMP File</span>
<span class="t" style="left:862.21px;top:285.00px;font-size:12px;color:#6d6d6d;transform:scaleX(0.8822);line-height:20px;">5 KB</span>
<svg style="left:321px;top:307px" width="13" height="17" viewBox="0 0 13 17">
<defs><linearGradient id="dg6" x1="0" y1="0" x2="1" y2="1"><stop offset="0.3" stop-color="#fff"/><stop offset="1" stop-color="#eceef6"/></linearGradient></defs>
<path d="M0.5 0.5 L8.5 0.5 L11.5 3.5 L11.5 15.5 L0.5 15.5 Z" fill="url(#dg6)" stroke="#8e8e8e"/>
<path d="M8.5 0.5 L8.5 3.5 L11.5 3.5" fill="#f4f4f4" stroke="#8e8e8e" stroke-width="0.9"/>
</svg>
<span class="t" style="left:339.18px;top:306.00px;font-size:12px;color:#000;transform:scaleX(0.9939);line-height:20px;">tmpB0F5.tmp</span>
<span class="t" style="left:579.04px;top:306.00px;font-size:12px;color:#6d6d6d;transform:scaleX(0.9874);line-height:20px;">7/6/2015 3:31 AM</span>
<span class="t" style="left:699.15px;top:306.00px;font-size:12px;color:#6d6d6d;transform:scaleX(0.9817);line-height:20px;">TMP File</span>
<span class="t" style="left:862.21px;top:306.00px;font-size:12px;color:#6d6d6d;transform:scaleX(0.8822);line-height:20px;">5 KB</span>
<svg style="left:321px;top:328px" width="13" height="17" viewBox="0 0 13 17">
<defs><linearGradient id="dg7" x1="0" y1="0" x2="1" y2="1"><stop offset="0.3" stop-color="#fff"/><stop offset="1" stop-color="#eceef6"/></linearGradient></defs>
<path d="M0.5 0.5 L8.5 0.5 L11.5 3.5 L11.5 15.5 L0.5 15.5 Z" fill="url(#dg7)" stroke="#8e8e8e"/>
<path d="M8.5 0.5 L8.5 3.5 L11.5 3.5" fill="#f4f4f4" stroke="#8e8e8e" stroke-width="0.9"/>
</svg>
<span class="t" style="left:339.17px;top:327.00px;font-size:12px;color:#000;transform:scaleX(1.0063);line-height:20px;">tmpC0C5.tmp</span>
<span class="t" style="left:579.04px;top:327.00px;font-size:12px;color:#6d6d6d;transform:scaleX(0.9874);line-height:20px;">7/6/2015 3:31 AM</span>
<span class="t" style="left:699.15px;top:327.00px;font-size:12px;color:#6d6d6d;transform:scaleX(0.9817);line-height:20px;">TMP File</span>
<span class="t" style="left:862.10px;top:327.00px;font-size:12px;color:#6d6d6d;transform:scaleX(0.8866);line-height:20px;">2 KB</span>
<svg style="left:321px;top:349px" width="13" height="17" viewBox="0 0 13 17">
<defs><linearGradient id="dg8" x1="0" y1="0" x2="1" y2="1"><stop offset="0.3" stop-color="#fff"/><stop offset="1" stop-color="#eceef6"/></linearGradient></defs>
<path d="M0.5 0.5 L8.5 0.5 L11.5 3.5 L11.5 15.5 L0.5 15.5 Z" fill="url(#dg8)" stroke="#8e8e8e"/>
<path d="M8.5 0.5 L8.5 3.5 L11.5 3.5" fill="#f4f4f4" stroke="#8e8e8e" stroke-width="0.9"/>
</svg>
<span class="t" style="left:339.17px;top:348.00px;font-size:12px;color:#000;transform:scaleX(1.0037);line-height:20px;">tmpD052.tmp</span>
<span class="t" style="left:579.04px;top:348.00px;font-size:12px;color:#6d6d6d;transform:scaleX(0.9874);line-height:20px;">7/6/2015 3:25 AM</span>
<span class="t" style="left:699.15px;top:348.00px;font-size:12px;color:#6d6d6d;transform:scaleX(0.9817);line-height:20px;">TMP File</span>
<span class="t" style="left:862.10px;top:348.00px;font-size:12px;color:#6d6d6d;transform:scaleX(0.8866);line-height:20px;">2 KB</span>
<svg style="left:321px;top:370px" width="13" height="17" viewBox="0 0 13 17">
<defs><linearGradient id="dg9" x1="0" y1="0" x2="1" y2="1"><stop offset="0.3" stop-color="#fff"/><stop offset="1" stop-color="#eceef6"/></linearGradient></defs>
<path d="M0.5 0.5 L8.5 0.5 L11.5 3.5 L11.5 15.5 L0.5 15.5 Z" fill="url(#dg9)" stroke="#8e8e8e"/>
<path d="M8.5 0.5 L8.5 3.5 L11.5 3.5" fill="#f4f4f4" stroke="#8e8e8e" stroke-width="0.9"/><path d="M2 3.5 L7 3.5 M2 5.5 L10 5.5 M2 7.5 L10 7.5 M2 9.5 L10 9.5 M2 11.5 L10 11.5 M2 13.5 L10 13.5" stroke="#8e8e8e" stroke-width="1"/>
</svg>
<span class="t" style="left:339.36px;top:369.00px;font-size:12px;color:#000;transform:scaleX(1.0058);line-height:20px;">wmsetup</span>
<span class="t" style="left:579.04px;top:369.00px;font-size:12px;color:#6d6d6d;transform:scaleX(0.9874);line-height:20px;">7/6/2015 3:07 AM</span>
<span class="t" style="left:699.15px;top:369.00px;font-size:12px;color:#6d6d6d;transform:scaleX(0.9989);line-height:20px;">Text Document</span>
<span class="t" style="left:861.81px;top:369.00px;font-size:12px;color:#6d6d6d;transform:scaleX(0.8980);line-height:20px;">1 KB</span>
<div class="a" style="left:877px;top:617px;width:20px;height:22px;border:1px solid #1e9de0;border-bottom:none;background:#cfeaf8;"></div>
<svg style="left:881px;top:622px" width="17" height="13" viewBox="0 0 17 13">
<g fill="#fff" stroke="#8a8a8a" stroke-width="0.9"><rect x="0.45" y="0.45" width="4.1" height="4.1"/><rect x="0.45" y="4.5" width="4.1" height="4.1"/><rect x="0.45" y="8.55" width="4.1" height="4.1"/></g>
<rect x="2" y="2" width="1" height="1" fill="#3a7a50"/><rect x="2" y="6.05" width="1" height="1" fill="#4a7ff0"/><rect x="2" y="10.1" width="1" height="1" fill="#e02020"/>
<g stroke="#777" stroke-width="1"><path d="M6 2.5 L10 2.5 M12 2.5 L16 2.5 M6 6.55 L10 6.55 M12 6.55 L16 6.55 M6 10.6 L10 10.6 M12 10.6 L16 10.6"/></g>
</svg>
<svg style="left:903px;top:622px" width="15" height="12" viewBox="0 0 15 12">
<defs><linearGradient id="vb" x1="0" y1="0" x2="0" y2="1"><stop offset="0" stop-color="#4f8ff2"/><stop offset="0.4" stop-color="#d6ecfb"/><stop offset="0.6" stop-color="#4f8060"/><stop offset="1" stop-color="#2f63c0"/></linearGradient></defs>
<rect x="0.5" y="0.5" width="13" height="10" fill="#fff" stroke="#9a9a9a"/>
<rect x="2" y="2" width="10" height="7" fill="url(#vb)"/>
<path d="M2 5 L5 5 L8 6.4 L12 7.4 L12 8 L2 8 Z" fill="#3f7450" opacity="0.85"/>
</svg>
<div class="a" style="left:0;top:728px;width:1024px;height:40px;background:#000;"></div>
<div class="a" style="left:48px;top:728px;width:320px;height:40px;background:#323232;"></div>
<svg style="left:16px;top:740px" width="17" height="17" viewBox="0 0 17 17">
<path d="M0 2.3 L6.2 1.4 L6.2 7.3 L0 7.3 Z M7.2 1.25 L16.2 0 L16.2 7.3 L7.2 7.3 Z M0 8.3 L6.2 8.3 L6.2 14.3 L0 13.4 Z M7.2 8.3 L16.2 8.3 L16.2 15.8 L7.2 14.5 Z" fill="#fff"/></svg>
<span class="t" style="left:59.98px;top:738.00px;font-size:15px;color:#9d9d9d;transform:scaleX(0.9847);line-height:21px;">Search the web and Windows</span>
<svg style="left:382px;top:741px" width="21" height="15" viewBox="0 0 21 15">
<rect x="4.5" y="0.5" width="12" height="13.6" fill="none" stroke="#fff" stroke-width="1.1"/>
<path d="M2.6 2.5 L0.5 2.5 L0.5 12 L2.6 12 M18.4 2.5 L20.5 2.5 L20.5 12 L18.4 12" fill="none" stroke="#fff" stroke-width="1.1"/></svg>
<svg style="left:431px;top:736px" width="22" height="24" viewBox="0 0 22 24">
<path d="M1 10.9 C2 4.5 7 1 12 1 C18 1 21 5.6 21 10.6 L21 14.6 L8.6 14.6 C9 17 11 18 13.6 18 C15.6 18 17.6 17.2 19 16.2 L19 20.8 C17.4 22 15.4 22.8 12.8 22.8 C7 22.8 3.1 19.4 3.1 14 C3.1 10.4 5.2 7.8 8 6.2 C5 7 2.6 8.6 1 10.9 Z M8.4 10.2 L15.1 10.2 C15.1 7.4 13.8 5.7 11.8 5.7 C9.9 5.7 8.7 7.4 8.4 10.2 Z" fill="#0a7de0" fill-rule="evenodd"/></svg>
<div class="a" style="left:422px;top:766px;width:40px;height:2px;background:#76b9ed;"></div>
<div class="a" style="left:467px;top:728px;width:48px;height:40px;background:#323539;"></div>
<div class="a" style="left:467px;top:766px;width:48px;height:2px;background:#76b9ed;"></div>
<svg style="left:480px;top:739px" width="22" height="19" viewBox="0 0 22 19">
<defs><linearGradient id="fe1" x1="0" y1="0" x2="1" y2="1"><stop offset="0" stop-color="#ffe794"/><stop offset="0.6" stop-color="#fde083"/><stop offset="1" stop-color="#fbcf4e"/></linearGradient>
<linearGradient id="fe2" x1="0" y1="0" x2="1" y2="1"><stop offset="0" stop-color="#3cbcfb"/><stop offset="0.5" stop-color="#14aef8"/><stop offset="1" stop-color="#0f9fee"/></linearGradient></defs>
<path d="M0 0 L9.4 0 L10.6 1.4 L10.6 3 L0 3 Z" fill="#f4c538"/>
<path d="M0 2.8 L9.6 2.8 L10.6 1.2 L21.4 1.2 L21.4 17 L0 17 Z" fill="url(#fe1)"/>
<rect x="2" y="1" width="1.2" height="1.1" fill="#4fd0e8"/><rect x="3.2" y="1" width="3.8" height="1.1" fill="#f6f0d0"/>
<path d="M4 18 L4 10 L18 10 L18 18 L14.1 18 L14.1 13.1 L8 13.1 L8 18 Z" fill="url(#fe2)"/>
</svg>
<svg style="left:859px;top:744px" width="13" height="8" viewBox="0 0 13 8"><path d="M0.6 7.2 L6.5 1 L12.4 7.2" stroke="#fff" stroke-width="1.2" fill="none"/></svg>
<svg style="left:881px;top:742px" width="17" height="15" viewBox="0 0 17 15">
<rect x="0.5" y="0.5" width="15" height="9" fill="none" stroke="#fff" stroke-width="1"/>
<rect x="0.5" y="0.5" width="4" height="5" fill="#000" stroke="#fff" stroke-width="1"/>
<path d="M1.6 2.2 L2.5 3.3 L3.4 2.2" fill="none" stroke="#fff" stroke-width="0.8"/>
<path d="M2.5 5.5 L2.5 12.5 L6.5 12.5" fill="none" stroke="#fff" stroke-width="1"/>
<path d="M11.5 4.6 L16.6 14 L6.4 14 Z" fill="#fcc000" stroke="#000" stroke-width="0.5"/>
<rect x="11" y="8" width="1" height="3.4" fill="#000"/><rect x="11" y="12.1" width="1" height="1.1" fill="#000"/>
</svg>
<svg style="left:905px;top:742px" width="17" height="15" viewBox="0 0 17 15">
<path d="M0.5 3.5 L2.5 3.5 L5.5 0.5 L5.5 11.7 L2.5 8.5 L0.5 8.5 Z" fill="none" stroke="#fff" stroke-width="1"/>
<circle cx="11.7" cy="9.7" r="4.5" fill="#e81123"/>
<path d="M9.5 7.5 L13.9 11.9 M13.9 7.5 L9.5 11.9" stroke="#fff" stroke-width="1.4"/>
</svg>
<svg style="left:929px;top:740px" width="17" height="16" viewBox="0 0 17 16">
<path d="M0.5 0.5 L15.5 0.5 L15.5 12.5 L0.5 12.5 Z" fill="none" stroke="#fff" stroke-width="1"/>
<path d="M3 3.5 L13 3.5 M3 6 L13 6 M3 9.5 L6.4 9.5" stroke="#fff" stroke-width="1"/>
<circle cx="11.3" cy="11.5" r="3.9" fill="#000" stroke="#fff" stroke-width="1.1"/>
<path d="M9.3 11.5 L13.3 11.5" stroke="#fff" stroke-width="1"/>
</svg>
<span class="t" style="left:961.56px;top:729.00px;font-size:12px;color:#fff;transform:scaleX(1.0003);line-height:20px;">3:40 AM</span>
<span class="t" style="left:960.43px;top:746.00px;font-size:12px;color:#fff;transform:scaleX(1.0068);line-height:20px;">7/6/2015</span>
<div class="a" style="left:1019px;top:728px;width:1px;height:40px;background:#555;"></div>
</body></html>
